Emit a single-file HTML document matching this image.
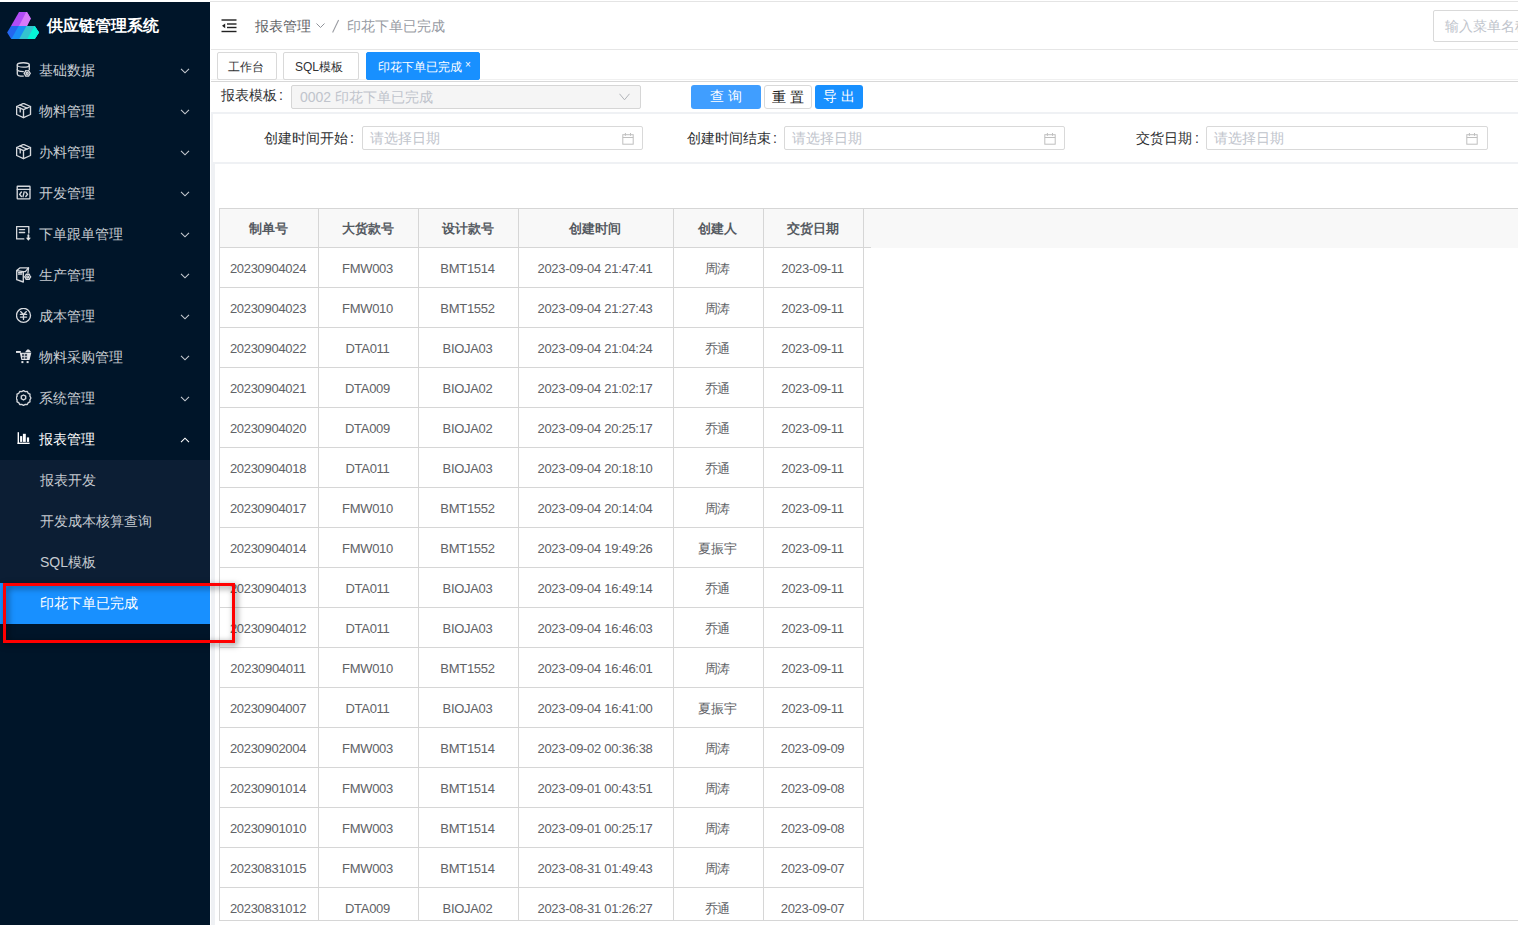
<!DOCTYPE html>
<html><head><meta charset="utf-8">
<style>
*{box-sizing:border-box;margin:0;padding:0}
html,body{width:1518px;height:925px;overflow:hidden;background:#fff;font-family:"Liberation Sans",sans-serif;position:relative}
.abs{position:absolute}
.mi{position:absolute;left:0;width:210px;height:41px;font-size:14px}
.mi .t{position:absolute;left:39px;top:12px;line-height:17px;white-space:nowrap}
.mi svg.ic{position:absolute;left:16px;top:12px}
.mi .arr{position:absolute;left:180px;top:18px}
.sub{position:absolute;left:0;width:210px;height:41px;font-size:14px}
.sub .t{position:absolute;left:40px;top:12px;line-height:17px;white-space:nowrap}
.th{position:absolute;top:209px;height:38px;line-height:40px;text-align:center;font-size:13px;font-weight:bold;color:#555a61}
.td{position:absolute;height:39px;line-height:41px;text-align:center;font-size:13px;color:#606266;letter-spacing:-0.3px;white-space:nowrap}
.lbl{position:absolute;font-size:14px;color:#303133;line-height:17px;white-space:nowrap}
.inp{position:absolute;height:24px;border:1px solid #d9d9d9;border-radius:2px;background:#fff}
.ph{position:absolute;left:7px;top:3px;line-height:17px;font-size:14px;color:#c0c4cc;white-space:nowrap}
.tab{position:absolute;top:52px;height:28px;border:1px solid #d9d9d9;border-radius:2px;font-size:12px;color:#303133;line-height:28px;white-space:nowrap}
.btn{position:absolute;top:85px;height:24px;border-radius:3px;font-size:14px;line-height:22px;text-align:center;white-space:nowrap;letter-spacing:4px;padding-left:4px}
</style></head><body>
<!-- sidebar -->
<div class="abs" style="left:0;top:2px;width:210px;height:923px;background:#001529"></div>
<div class="abs" style="left:0;top:460px;width:210px;height:123px;background:#0c1e34"></div>
<div class="abs" style="left:0;top:583px;width:210px;height:41px;background:#1890ff"></div>
<!-- logo -->
<svg class="abs" style="left:0;top:0" width="45" height="45" viewBox="0 0 45 45">
<path d="M19 11.9H27L30.8 18.6L27 25.9H11Z" fill="#b24cf6"/>
<path d="M26.2 11.9H27L30.8 18.6L27 25.9H19Z" fill="#d97af9"/>
<path d="M11 25.9H34.7L39 32.5L34.7 39.1H11.2L7.1 32.5Z" fill="#2366ee"/>
<path d="M18.6 25.9H34.7L39 32.5L34.7 39.1H11.4Z" fill="#1a8ff6"/>
<path d="M26.4 25.9H34.7L39 32.5L34.7 39.1H19.2Z" fill="#33c4cf"/>
<path d="M34.4 25.9H34.7L39 32.5L34.7 39.1H27.3Z" fill="#05f5d6"/>
</svg>
<div class="abs" style="left:47px;top:16px;font-size:16px;font-weight:bold;color:#fff;line-height:20px;white-space:nowrap">供应链管理系统</div>
<div class="mi" style="top:50px;color:#c6cbd1"><svg class="ic" width="16" height="16" viewBox="0 0 16 16" fill="none" stroke="#d6d9dd" stroke-width="1.35" stroke-linejoin="round" stroke-linecap="round"><ellipse cx="7.3" cy="2.9" rx="6" ry="2.2"/><path d="M1.3 2.9v9c0 1.2 2.7 2.2 6 2.2"/><path d="M13.3 2.9v4.6"/><path d="M1.3 7.5c0 1.2 2.7 2.1 6 2.1"/><polygon points="14.30,11.40 13.35,12.64 12.75,14.08 11.20,13.88 9.65,14.08 9.05,12.64 8.10,11.40 9.05,10.16 9.65,8.72 11.20,8.92 12.75,8.72 13.35,10.16" fill="#001529"/><circle cx="11.2" cy="11.4" r="1.0"/></svg><span class="t">基础数据</span><svg class="arr" width="10" height="6" viewBox="0 0 10 6" fill="none" stroke="#c6cbd1" stroke-width="1.1"><path d="M1 .8l4 4 4-4"/></svg></div>
<div class="mi" style="top:91px;color:#c6cbd1"><svg class="ic" width="16" height="16" viewBox="0 0 16 16" fill="none" stroke="#d6d9dd" stroke-width="1.35" stroke-linejoin="round" stroke-linecap="round"><path d="M7.5 0.4L14.5 3.5v8L7.5 14.6L0.6 11.5v-8z"/><path d="M0.6 3.5L7.5 6.7l7-3.2M7.5 6.7v7.9"/><path d="M4 2l7 3.2M4.2 5.1v3.8"/></svg><span class="t">物料管理</span><svg class="arr" width="10" height="6" viewBox="0 0 10 6" fill="none" stroke="#c6cbd1" stroke-width="1.1"><path d="M1 .8l4 4 4-4"/></svg></div>
<div class="mi" style="top:132px;color:#c6cbd1"><svg class="ic" width="16" height="16" viewBox="0 0 16 16" fill="none" stroke="#d6d9dd" stroke-width="1.35" stroke-linejoin="round" stroke-linecap="round"><path d="M7.5 0.4L14.5 3.5v8L7.5 14.6L0.6 11.5v-8z"/><path d="M0.6 3.5L7.5 6.7l7-3.2M7.5 6.7v7.9"/><path d="M4 2l7 3.2M4.2 5.1v3.8"/></svg><span class="t">办料管理</span><svg class="arr" width="10" height="6" viewBox="0 0 10 6" fill="none" stroke="#c6cbd1" stroke-width="1.1"><path d="M1 .8l4 4 4-4"/></svg></div>
<div class="mi" style="top:173px;color:#c6cbd1"><svg class="ic" width="16" height="16" viewBox="0 0 16 16" fill="none" stroke="#d6d9dd" stroke-width="1.35" stroke-linejoin="round" stroke-linecap="round"><rect x="1.2" y="1.2" width="12.8" height="12.6" rx=".5"/><path d="M1.2 4.3h12.8"/><path d="M5.4 7L3.6 9.3l1.8 2.2M9.8 7l1.8 2.3-1.8 2.2M8.2 6.8l-1.2 4.9"/></svg><span class="t">开发管理</span><svg class="arr" width="10" height="6" viewBox="0 0 10 6" fill="none" stroke="#c6cbd1" stroke-width="1.1"><path d="M1 .8l4 4 4-4"/></svg></div>
<div class="mi" style="top:214px;color:#c6cbd1"><svg class="ic" width="16" height="16" viewBox="0 0 16 16" fill="none" stroke="#d6d9dd" stroke-width="1.35" stroke-linejoin="round" stroke-linecap="round"><path d="M7.8 12.9H0.6V0.6h12.2v6.4"/><path d="M3.4 3.6h5.2M3.4 6.5h5.2"/><path d="M12.4 9.2v3.2" stroke-width="1.8"/><path d="M9.9 11.8l2.5 2.9 2.5-2.9z" fill="#e6e8ea" stroke="none"/></svg><span class="t">下单跟单管理</span><svg class="arr" width="10" height="6" viewBox="0 0 10 6" fill="none" stroke="#c6cbd1" stroke-width="1.1"><path d="M1 .8l4 4 4-4"/></svg></div>
<div class="mi" style="top:255px;color:#c6cbd1"><svg class="ic" width="16" height="16" viewBox="0 0 16 16" fill="none" stroke="#d6d9dd" stroke-width="1.35" stroke-linejoin="round" stroke-linecap="round"><path d="M0.7 3.6L3.8 0.9h8.7L9.4 4.6M0.7 3.6v9.1L7.3 15V4.6L0.7 3.6zM7.3 4.6h2.1"/><path d="M2.5 5.6h3.6M2.5 7.1h3.2"/><path d="M12.5 1l-0.6 5"/><polygon points="14.70,9.80 13.78,11.00 13.20,12.40 11.70,12.20 10.20,12.40 9.62,11.00 8.70,9.80 9.62,8.60 10.20,7.20 11.70,7.40 13.20,7.20 13.78,8.60" fill="#001529"/><circle cx="11.7" cy="9.8" r="1.0"/></svg><span class="t">生产管理</span><svg class="arr" width="10" height="6" viewBox="0 0 10 6" fill="none" stroke="#c6cbd1" stroke-width="1.1"><path d="M1 .8l4 4 4-4"/></svg></div>
<div class="mi" style="top:296px;color:#c6cbd1"><svg class="ic" width="16" height="16" viewBox="0 0 16 16" fill="none" stroke="#d6d9dd" stroke-width="1.35" stroke-linejoin="round" stroke-linecap="round"><circle cx="7.5" cy="7.4" r="7"/><path d="M4.6 3.6L7.5 6.4l2.9-2.8M4.4 6.4h6.2M4.4 9.1h6.2M7.5 6.4v5"/></svg><span class="t">成本管理</span><svg class="arr" width="10" height="6" viewBox="0 0 10 6" fill="none" stroke="#c6cbd1" stroke-width="1.1"><path d="M1 .8l4 4 4-4"/></svg></div>
<div class="mi" style="top:337px;color:#c6cbd1"><svg class="ic" width="16" height="16" viewBox="0 0 16 16"><rect x="-0.2" y="2" width="5" height="1.9" fill="#e3e5e8"/><path d="M3.8 3.8H15.3L13.5 11H5.4z" fill="#e3e5e8"/><path d="M9 3.2L11.2 0.6H13L15.3 3.2z" fill="#e3e5e8"/><rect x="6" y="4.9" width="5.1" height="5" fill="#4a5665"/><rect x="8.3" y="4.9" width=".7" height="5" fill="#e3e5e8"/><rect x="6" y="7.1" width="5.1" height=".7" fill="#e3e5e8"/><rect x="5.4" y="12.1" width="2" height="2" fill="#e3e5e8"/><rect x="10.6" y="12.1" width="2" height="2" fill="#e3e5e8"/></svg><span class="t">物料采购管理</span><svg class="arr" width="10" height="6" viewBox="0 0 10 6" fill="none" stroke="#c6cbd1" stroke-width="1.1"><path d="M1 .8l4 4 4-4"/></svg></div>
<div class="mi" style="top:378px;color:#c6cbd1"><svg class="ic" width="16" height="16" viewBox="0 0 16 16" fill="none" stroke="#d6d9dd" stroke-width="1.35" stroke-linejoin="round" stroke-linecap="round"><path d="M7.5 0.6l1.8 1 2-.1.9 1.8 1.8.9-.1 2 1 1.8-1 1.8.1 2-1.8.9-.9 1.8-2-.1-1.8 1-1.8-1-2 .1-.9-1.8-1.8-.9.1-2-1-1.8 1-1.8-.1-2 1.8-.9.9-1.8 2 .1z"/><path d="M7.5 5l2.2 1.2v2.5L7.5 10 5.3 8.7V6.2z"/></svg><span class="t">系统管理</span><svg class="arr" width="10" height="6" viewBox="0 0 10 6" fill="none" stroke="#c6cbd1" stroke-width="1.1"><path d="M1 .8l4 4 4-4"/></svg></div>
<div class="mi" style="top:419px;color:#fff"><svg class="ic" width="16" height="16" viewBox="0 0 16 16" fill="#fff"><rect x="1.6" y="1.2" width="1.4" height="11.8"/><rect x="1.6" y="11.6" width="12" height="1.4"/><rect x="4.1" y="5.1" width="2.1" height="5.8"/><rect x="6.9" y="2.8" width="2.9" height="8.1"/><rect x="10.9" y="6.4" width="2.2" height="4.5"/></svg><span class="t">报表管理</span><svg class="arr" width="10" height="6" viewBox="0 0 10 6" fill="none" stroke="#fff" stroke-width="1.1"><path d="M1 5.2l4-4 4 4"/></svg></div>
<div class="sub" style="top:460px;color:#c6cbd1"><span class="t">报表开发</span></div>
<div class="sub" style="top:501px;color:#c6cbd1"><span class="t">开发成本核算查询</span></div>
<div class="sub" style="top:542px;color:#c6cbd1"><span class="t">SQL模板</span></div>
<div class="sub" style="top:583px;color:#fff"><span class="t">印花下单已完成</span></div>
<!-- header -->
<div class="abs" style="left:210px;top:1px;width:1308px;height:1px;background:#e4e4e4"></div>
<div class="abs" style="left:211px;top:49px;width:1307px;height:1px;background:#e6e6e6"></div>
<svg class="abs" style="left:221px;top:19px" width="16" height="14" viewBox="0 0 16 14" fill="#222"><rect x="0.5" y="0.3" width="15" height="1.4"/><rect x="6" y="4.3" width="9.5" height="1.4"/><rect x="6" y="7.8" width="9.5" height="1.4"/><rect x="0.5" y="11.8" width="15" height="1.4"/><path d="M1 6.8L4.2 4.4v4.8z"/></svg>
<div class="abs" style="left:255px;top:18px;font-size:14px;line-height:17px;color:#606266;white-space:nowrap">报表管理</div>
<svg class="abs" style="left:316px;top:23px" width="9" height="6" viewBox="0 0 9 6" fill="none" stroke="#909399" stroke-width="1"><path d="M.5 .5l4 4 4-4"/></svg>
<svg class="abs" style="left:330px;top:18px" width="12" height="16" viewBox="0 0 12 16"><path d="M8.6 2L2.6 14.6" stroke="#9a9ca2" stroke-width="1.1"/></svg>
<div class="abs" style="left:347px;top:18px;font-size:14px;line-height:17px;color:#979ba3;white-space:nowrap">印花下单已完成</div>
<div class="inp" style="left:1433px;top:10px;width:120px;height:32px"><span class="ph" style="left:11px;top:7px">输入菜单名称</span></div>
<!-- tabs -->
<div class="abs" style="left:211px;top:79px;width:1307px;height:1px;background:#f0f0f0"></div>
<div class="abs" style="left:211px;top:81px;width:1307px;height:1px;background:#d8d8d8"></div>
<div class="tab" style="left:217px;width:60px;padding-left:10px">工作台</div>
<div class="tab" style="left:283px;width:76px;padding-left:11px">SQL模板</div>
<div class="tab" style="left:366px;width:114px;background:#1890ff;border-color:#1890ff;color:#fff;padding-left:11px">印花下单已完成<span style="position:absolute;left:98px;top:-2px;font-size:10px">×</span></div>
<!-- row 1 -->
<div class="lbl" style="left:221px;top:87px">报表模板<span style="margin-left:2px">:</span></div>
<div class="inp" style="left:291px;top:85px;width:350px;background:#f5f5f5;border-color:#d6d6d6"><span class="ph" style="left:8px;top:3px">0002 印花下单已完成</span>
<svg class="abs" style="left:327px;top:7px" width="11" height="8" viewBox="0 0 11 8" fill="none" stroke="#b0b3b8" stroke-width="1"><path d="M.5 .8l5 6 5-6"/></svg></div>
<div class="btn" style="left:691px;width:70px;background:#409eff;color:#fff">查询</div>
<div class="btn" style="left:764px;width:48px;border:1px solid #d9d9d9;color:#222;background:#fff">重置</div>
<div class="btn" style="left:815px;width:48px;background:#1890ff;color:#fff">导出</div>
<!-- gray containers -->
<div class="abs" style="left:211px;top:112px;width:1307px;height:813px;background:#eff1f4"></div>
<div class="abs" style="left:213px;top:114px;width:1305px;height:48px;background:#fff"></div>
<div class="abs" style="left:215px;top:164px;width:1303px;height:761px;background:#fff"></div>
<!-- filter row -->
<div class="lbl" style="left:264px;top:130px">创建时间开始<span style="margin-left:2px">:</span></div>
<div class="inp" style="left:362px;top:126px;width:281px"><span class="ph">请选择日期</span><span class="abs" style="left:259px;top:5px"><svg width="13" height="13" viewBox="0 0 13 13" fill="none" stroke="#bfbfbf" stroke-width="1"><rect x="0.8" y="1.7" width="10.4" height="9.5"/><path d="M0.8 4.5h10.4M3.4 0v2.8M8.5 0v2.8"/></svg></span></div>
<div class="lbl" style="left:687px;top:130px">创建时间结束<span style="margin-left:2px">:</span></div>
<div class="inp" style="left:784px;top:126px;width:281px"><span class="ph">请选择日期</span><span class="abs" style="left:259px;top:5px"><svg width="13" height="13" viewBox="0 0 13 13" fill="none" stroke="#bfbfbf" stroke-width="1"><rect x="0.8" y="1.7" width="10.4" height="9.5"/><path d="M0.8 4.5h10.4M3.4 0v2.8M8.5 0v2.8"/></svg></span></div>
<div class="lbl" style="left:1136px;top:130px">交货日期<span style="margin-left:3px">:</span></div>
<div class="inp" style="left:1206px;top:126px;width:282px"><span class="ph">请选择日期</span><span class="abs" style="left:259px;top:5px"><svg width="13" height="13" viewBox="0 0 13 13" fill="none" stroke="#bfbfbf" stroke-width="1"><rect x="0.8" y="1.7" width="10.4" height="9.5"/><path d="M0.8 4.5h10.4M3.4 0v2.8M8.5 0v2.8"/></svg></span></div>
<!-- table -->
<div class="abs" style="left:219px;top:208px;width:1299px;height:1px;background:#d6d6d6"></div>
<div class="abs" style="left:220px;top:209px;width:1298px;height:39px;background:#f8f8f8"></div>
<div class="abs" style="left:219px;top:247px;width:652px;height:1px;background:#d6d6d6"></div>
<div class="abs" style="left:219px;top:208px;width:1px;height:713px;background:#d6d6d6"></div>
<div class="abs" style="left:318px;top:208px;width:1px;height:712px;background:#d6d6d6"></div>
<div class="abs" style="left:418px;top:208px;width:1px;height:712px;background:#d6d6d6"></div>
<div class="abs" style="left:518px;top:208px;width:1px;height:712px;background:#d6d6d6"></div>
<div class="abs" style="left:673px;top:208px;width:1px;height:712px;background:#d6d6d6"></div>
<div class="abs" style="left:763px;top:208px;width:1px;height:712px;background:#d6d6d6"></div>
<div class="abs" style="left:863px;top:208px;width:1px;height:712px;background:#d6d6d6"></div>
<div class="th" style="left:219px;width:98px">制单号</div>
<div class="th" style="left:318px;width:99px">大货款号</div>
<div class="th" style="left:418px;width:99px">设计款号</div>
<div class="th" style="left:518px;width:154px">创建时间</div>
<div class="th" style="left:673px;width:89px">创建人</div>
<div class="th" style="left:763px;width:99px">交货日期</div>
<div class="abs" style="left:219px;top:287px;width:645px;height:1px;background:#d6d6d6"></div>
<div class="td" style="top:248px;left:219px;width:98px">20230904024</div>
<div class="td" style="top:248px;left:318px;width:99px">FMW003</div>
<div class="td" style="top:248px;left:418px;width:99px">BMT1514</div>
<div class="td" style="top:248px;left:518px;width:154px">2023-09-04 21:47:41</div>
<div class="td" style="top:248px;left:673px;width:89px">周涛</div>
<div class="td" style="top:248px;left:763px;width:99px">2023-09-11</div>
<div class="abs" style="left:219px;top:327px;width:645px;height:1px;background:#d6d6d6"></div>
<div class="td" style="top:288px;left:219px;width:98px">20230904023</div>
<div class="td" style="top:288px;left:318px;width:99px">FMW010</div>
<div class="td" style="top:288px;left:418px;width:99px">BMT1552</div>
<div class="td" style="top:288px;left:518px;width:154px">2023-09-04 21:27:43</div>
<div class="td" style="top:288px;left:673px;width:89px">周涛</div>
<div class="td" style="top:288px;left:763px;width:99px">2023-09-11</div>
<div class="abs" style="left:219px;top:367px;width:645px;height:1px;background:#d6d6d6"></div>
<div class="td" style="top:328px;left:219px;width:98px">20230904022</div>
<div class="td" style="top:328px;left:318px;width:99px">DTA011</div>
<div class="td" style="top:328px;left:418px;width:99px">BIOJA03</div>
<div class="td" style="top:328px;left:518px;width:154px">2023-09-04 21:04:24</div>
<div class="td" style="top:328px;left:673px;width:89px">乔通</div>
<div class="td" style="top:328px;left:763px;width:99px">2023-09-11</div>
<div class="abs" style="left:219px;top:407px;width:645px;height:1px;background:#d6d6d6"></div>
<div class="td" style="top:368px;left:219px;width:98px">20230904021</div>
<div class="td" style="top:368px;left:318px;width:99px">DTA009</div>
<div class="td" style="top:368px;left:418px;width:99px">BIOJA02</div>
<div class="td" style="top:368px;left:518px;width:154px">2023-09-04 21:02:17</div>
<div class="td" style="top:368px;left:673px;width:89px">乔通</div>
<div class="td" style="top:368px;left:763px;width:99px">2023-09-11</div>
<div class="abs" style="left:219px;top:447px;width:645px;height:1px;background:#d6d6d6"></div>
<div class="td" style="top:408px;left:219px;width:98px">20230904020</div>
<div class="td" style="top:408px;left:318px;width:99px">DTA009</div>
<div class="td" style="top:408px;left:418px;width:99px">BIOJA02</div>
<div class="td" style="top:408px;left:518px;width:154px">2023-09-04 20:25:17</div>
<div class="td" style="top:408px;left:673px;width:89px">乔通</div>
<div class="td" style="top:408px;left:763px;width:99px">2023-09-11</div>
<div class="abs" style="left:219px;top:487px;width:645px;height:1px;background:#d6d6d6"></div>
<div class="td" style="top:448px;left:219px;width:98px">20230904018</div>
<div class="td" style="top:448px;left:318px;width:99px">DTA011</div>
<div class="td" style="top:448px;left:418px;width:99px">BIOJA03</div>
<div class="td" style="top:448px;left:518px;width:154px">2023-09-04 20:18:10</div>
<div class="td" style="top:448px;left:673px;width:89px">乔通</div>
<div class="td" style="top:448px;left:763px;width:99px">2023-09-11</div>
<div class="abs" style="left:219px;top:527px;width:645px;height:1px;background:#d6d6d6"></div>
<div class="td" style="top:488px;left:219px;width:98px">20230904017</div>
<div class="td" style="top:488px;left:318px;width:99px">FMW010</div>
<div class="td" style="top:488px;left:418px;width:99px">BMT1552</div>
<div class="td" style="top:488px;left:518px;width:154px">2023-09-04 20:14:04</div>
<div class="td" style="top:488px;left:673px;width:89px">周涛</div>
<div class="td" style="top:488px;left:763px;width:99px">2023-09-11</div>
<div class="abs" style="left:219px;top:567px;width:645px;height:1px;background:#d6d6d6"></div>
<div class="td" style="top:528px;left:219px;width:98px">20230904014</div>
<div class="td" style="top:528px;left:318px;width:99px">FMW010</div>
<div class="td" style="top:528px;left:418px;width:99px">BMT1552</div>
<div class="td" style="top:528px;left:518px;width:154px">2023-09-04 19:49:26</div>
<div class="td" style="top:528px;left:673px;width:89px">夏振宇</div>
<div class="td" style="top:528px;left:763px;width:99px">2023-09-11</div>
<div class="abs" style="left:219px;top:607px;width:645px;height:1px;background:#d6d6d6"></div>
<div class="td" style="top:568px;left:219px;width:98px">20230904013</div>
<div class="td" style="top:568px;left:318px;width:99px">DTA011</div>
<div class="td" style="top:568px;left:418px;width:99px">BIOJA03</div>
<div class="td" style="top:568px;left:518px;width:154px">2023-09-04 16:49:14</div>
<div class="td" style="top:568px;left:673px;width:89px">乔通</div>
<div class="td" style="top:568px;left:763px;width:99px">2023-09-11</div>
<div class="abs" style="left:219px;top:647px;width:645px;height:1px;background:#d6d6d6"></div>
<div class="td" style="top:608px;left:219px;width:98px">20230904012</div>
<div class="td" style="top:608px;left:318px;width:99px">DTA011</div>
<div class="td" style="top:608px;left:418px;width:99px">BIOJA03</div>
<div class="td" style="top:608px;left:518px;width:154px">2023-09-04 16:46:03</div>
<div class="td" style="top:608px;left:673px;width:89px">乔通</div>
<div class="td" style="top:608px;left:763px;width:99px">2023-09-11</div>
<div class="abs" style="left:219px;top:687px;width:645px;height:1px;background:#d6d6d6"></div>
<div class="td" style="top:648px;left:219px;width:98px">20230904011</div>
<div class="td" style="top:648px;left:318px;width:99px">FMW010</div>
<div class="td" style="top:648px;left:418px;width:99px">BMT1552</div>
<div class="td" style="top:648px;left:518px;width:154px">2023-09-04 16:46:01</div>
<div class="td" style="top:648px;left:673px;width:89px">周涛</div>
<div class="td" style="top:648px;left:763px;width:99px">2023-09-11</div>
<div class="abs" style="left:219px;top:727px;width:645px;height:1px;background:#d6d6d6"></div>
<div class="td" style="top:688px;left:219px;width:98px">20230904007</div>
<div class="td" style="top:688px;left:318px;width:99px">DTA011</div>
<div class="td" style="top:688px;left:418px;width:99px">BIOJA03</div>
<div class="td" style="top:688px;left:518px;width:154px">2023-09-04 16:41:00</div>
<div class="td" style="top:688px;left:673px;width:89px">夏振宇</div>
<div class="td" style="top:688px;left:763px;width:99px">2023-09-11</div>
<div class="abs" style="left:219px;top:767px;width:645px;height:1px;background:#d6d6d6"></div>
<div class="td" style="top:728px;left:219px;width:98px">20230902004</div>
<div class="td" style="top:728px;left:318px;width:99px">FMW003</div>
<div class="td" style="top:728px;left:418px;width:99px">BMT1514</div>
<div class="td" style="top:728px;left:518px;width:154px">2023-09-02 00:36:38</div>
<div class="td" style="top:728px;left:673px;width:89px">周涛</div>
<div class="td" style="top:728px;left:763px;width:99px">2023-09-09</div>
<div class="abs" style="left:219px;top:807px;width:645px;height:1px;background:#d6d6d6"></div>
<div class="td" style="top:768px;left:219px;width:98px">20230901014</div>
<div class="td" style="top:768px;left:318px;width:99px">FMW003</div>
<div class="td" style="top:768px;left:418px;width:99px">BMT1514</div>
<div class="td" style="top:768px;left:518px;width:154px">2023-09-01 00:43:51</div>
<div class="td" style="top:768px;left:673px;width:89px">周涛</div>
<div class="td" style="top:768px;left:763px;width:99px">2023-09-08</div>
<div class="abs" style="left:219px;top:847px;width:645px;height:1px;background:#d6d6d6"></div>
<div class="td" style="top:808px;left:219px;width:98px">20230901010</div>
<div class="td" style="top:808px;left:318px;width:99px">FMW003</div>
<div class="td" style="top:808px;left:418px;width:99px">BMT1514</div>
<div class="td" style="top:808px;left:518px;width:154px">2023-09-01 00:25:17</div>
<div class="td" style="top:808px;left:673px;width:89px">周涛</div>
<div class="td" style="top:808px;left:763px;width:99px">2023-09-08</div>
<div class="abs" style="left:219px;top:887px;width:645px;height:1px;background:#d6d6d6"></div>
<div class="td" style="top:848px;left:219px;width:98px">20230831015</div>
<div class="td" style="top:848px;left:318px;width:99px">FMW003</div>
<div class="td" style="top:848px;left:418px;width:99px">BMT1514</div>
<div class="td" style="top:848px;left:518px;width:154px">2023-08-31 01:49:43</div>
<div class="td" style="top:848px;left:673px;width:89px">周涛</div>
<div class="td" style="top:848px;left:763px;width:99px">2023-09-07</div>
<div class="td" style="top:888px;left:219px;width:98px">20230831012</div>
<div class="td" style="top:888px;left:318px;width:99px">DTA009</div>
<div class="td" style="top:888px;left:418px;width:99px">BIOJA02</div>
<div class="td" style="top:888px;left:518px;width:154px">2023-08-31 01:26:27</div>
<div class="td" style="top:888px;left:673px;width:89px">乔通</div>
<div class="td" style="top:888px;left:763px;width:99px">2023-09-07</div>
<div class="abs" style="left:219px;top:920px;width:1299px;height:1px;background:#d6d6d6"></div>
<!-- red annotation -->
<div class="abs" style="left:3px;top:583px;width:232px;height:60px;border:3px solid #ff0000;filter:drop-shadow(2px 2px 3px rgba(0,0,0,.55))"></div>
</body></html>
